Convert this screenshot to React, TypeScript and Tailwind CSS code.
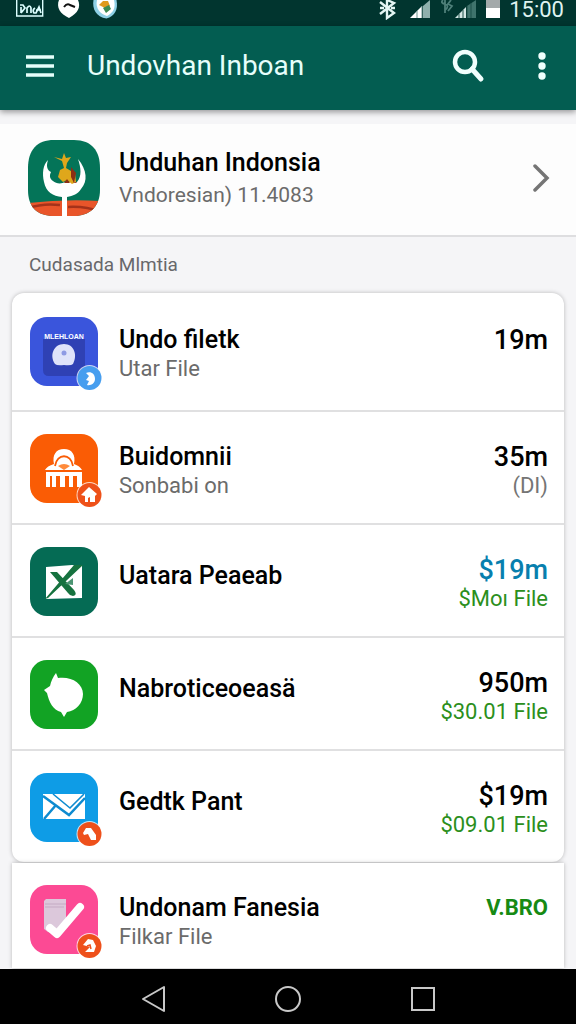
import type { ReactNode } from 'react';

interface AppItem {
  title: string;
  subtitle?: string;
  value: string;
  valueClass?: string;
  note?: string;
  noteClass?: string;
  icon: ReactNode;
}

const BLACK = 'text-[27px] text-black font-medium';
const GREEN = 'text-[#2b8f1c]';

function StatusBar() {
  return (
    <div className="h-[26px] bg-[#01352f] flex items-start justify-between pl-4 pr-3">
      <svg width="104" height="20" viewBox="0 0 104 20" aria-hidden="true">
        <path d="M.7 0v16h26V0" fill="none" stroke="#dff" strokeWidth="1.4" />
        <path d="M4 5h3l2 3-4 5M5 7v6M11 13V8q3-4 4 0v5M19 8q-3 2-1 5h2l3-6 2 6M20 10h5" fill="none" stroke="#dff" strokeWidth="1.7" />
        <path d="M43 0h19c3 7 0 13-9 18C44 14 40 7 43 0z" fill="#fff" />
        <path d="M48 7q3-4 6-2l5 2" fill="none" stroke="#111" strokeWidth="2" />
        <path d="M77.500 0h23c2 10-2 16-10 18.500C80 17 76 9 77.500 0z" fill="#8ed0e6" />
        <path d="M81 0h17c2 8-1 13-7 16C84 14 79 8 81 0z" fill="#fff" />
        <path d="M83 5l4-4h5l2 5-4 3-3-2z" fill="#e09a1c" />
        <path d="M87 8l6-3 2 4-5 4z" fill="#3c8b52" />
      </svg>
      <div className="flex items-start gap-2">
        <svg width="122" height="20" viewBox="0 0 122 20" aria-hidden="true">
          <path d="M1 2l14 11-7 5V0l7 3L1 14M1 8h4M12 8h4" fill="none" stroke="#e4f5f3" strokeWidth="2.400" />
          <path d="M31 18L43 6v12z" fill="#fff" />
          <path d="M44 6l7-6v18h-7z" fill="#8fb0ac" />
          <path d="M38 18v-7M43 18V6" stroke="#6f9590" />
          <path d="M64 0q-3 3 2 4 5 2 0 6M66 0v13M72 0l-3 4 4 2-4 5" fill="none" stroke="#4e7f79" strokeWidth="1.800" />
          <path d="M76 18L87 7v11z" fill="#d5e8e5" />
          <path d="M88 6l9-6v18h-9z" fill="#3f736c" />
          <path d="M80 18v-4M84 18v-8M88 18V6M92 18V3" stroke="#1c5049" />
          <path d="M107 0h14v9h-14z" fill="#a3a9aa" />
          <path d="M107 8h14v10h-14z" fill="#fff" />
        </svg>
        <span className="text-[22px] leading-5 text-[#dff3f1]">15:00</span>
      </div>
    </div>
  );
}

function Badge({ color, children }: { color: string; children: ReactNode }) {
  return (
    <g>
      <circle cx="59.500" cy="61" r="13" fill="#fff" fillOpacity=".75" />
      <circle cx="59.500" cy="61" r="12" fill={color} />
      {children}
    </g>
  );
}

// every tile is 68 wide, badges hang over the corner
function Tile({ color, children }: { color: string; children: ReactNode }) {
  return (
    <svg width="68" height="69" viewBox="0 0 68 69" className="shrink-0 overflow-visible" aria-hidden="true">
      <rect width="68" height="69" rx="17" fill={color} />
      {children}
    </svg>
  );
}

const items: AppItem[] = [
  {
    title: 'Undo filetk',
    subtitle: 'Utar File',
    value: '19m',
    icon: (
      <Tile color="#3a55dc">
        <path d="M13 22h42v37H19q-6 0-6-6z" fill="#2f41b4" />
        <text x="34" y="22" textAnchor="middle" fontSize="7" fontWeight="700" fontFamily="Liberation Sans, sans-serif" fill="#fff">MLEHLOAN</text>
        <path d="M25 47c-6-9-1-20 9-20s14 11 9 20q-2 2-9 1-7 1-9-1z" fill="#dfe3fa" />
        <circle cx="34" cy="36" r="2.500" fill="#8e9ae4" />
        <Badge color="#479eef">
          <path d="M56 56c5-2 9 1 9 6 0 4-4 7-8 6l2-4-3-1 3-4z" fill="#fff" />
        </Badge>
      </Tile>
    ),
  },
  {
    title: 'Buidomnii',
    subtitle: 'Sonbabi on',
    value: '35m',
    note: '(DI)',
    noteClass: 'text-[#757575]',
    icon: (
      <Tile color="#fa5c05">
        <path d="M15 36q2-4 9-6c-2-9 2-15 10-15s12 6 10 15q6 2 8 6z" fill="#fff" />
        <path d="M25 32c2-13 16-13 18 0" fill="none" stroke="#fa5c05" strokeWidth="1.800" />
        <path d="M28 32q6-4 12 0l-6 4z" fill="#ff8a3a" />
        <path d="M16 38h36v15h-5V42h-4v11h-4V42h-4v11h-5V42h-4v11h-4V42h-2v11h-4z" fill="#fff" />
        <Badge color="#ee5119">
          <path d="M51 61l8-8 8 7-2 2v6h-5v-5l-2 1v4h-3v-6z" fill="#fff" />
        </Badge>
      </Tile>
    ),
  },
  {
    title: 'Uatara Peaeab',
    value: '$19m',
    valueClass: 'text-[27px] text-[#087fae] font-medium',
    note: '$Moı File',
    noteClass: GREEN,
    icon: (
      <Tile color="#056b54">
        <path d="M16 20l26-2 10 1v32l-36 1z" fill="#fff" />
        <path d="M15 52L44 18h9L18 51zM20 25h7l17 18q4 5-1 6-3 0-5-3z" fill="#16723f" />
        <path d="M43 31v7l-8-1z" fill="#4c9573" />
      </Tile>
    ),
  },
  {
    title: 'Nabroticeoeasä',
    value: '950m',
    note: '$30.01 File',
    noteClass: GREEN,
    icon: (
      <Tile color="#12a324">
        <path d="M26 13l2 5c13-2 25 5 25 16 0 9-7 17-16 18l-3 5-3-5c-8-2-12-10-14-19l-3-3 6-4c1-5 3-9 6-13z" fill="#fff" />
      </Tile>
    ),
  },
  {
    title: 'Gedtk Pant',
    value: '$19m',
    note: '$09.01 File',
    noteClass: GREEN,
    icon: (
      <Tile color="#0e9ce6">
        <path d="M13 21h42v25H13z" fill="#fff" />
        <path d="M13 23l26 19L55 25M14 46l12-14" fill="none" stroke="#0e8bd0" strokeWidth="2.500" />
        <path d="M23 21l17 14 14-14" fill="none" stroke="#0e8bd0" strokeWidth="1.600" />
        <Badge color="#ee501b">
          <path d="M53 60l3-5 5 0 5 7v5h-5l-3-6-4 1z" fill="#fff" />
        </Badge>
      </Tile>
    ),
  },
];

const lastItem: AppItem = {
  title: 'Undonam Fanesia',
  subtitle: 'Filkar File',
  value: 'V.BRO',
  valueClass: 'text-[22px] text-[#168a14] font-bold',
  icon: (
    <Tile color="#fc4a94">
      <path d="M14 16l2-2h20v29l-10 5-8-1-4-3z" fill="#dcc8db" />
      <path d="M15 19h21M15 22h19" stroke="#c3aac4" strokeWidth="1.200" />
      <path d="M20 43l7 6 23-27" fill="none" stroke="#fff" strokeWidth="8" strokeLinecap="round" strokeLinejoin="round" />
      <Badge color="#ee501b">
        <path d="M53 60l5-6 5 1 3 6-2 6h-9l5-5z" fill="#fff" />
        <path d="M57 61l3-1 1 4" fill="none" stroke="#ee501b" strokeWidth="1.500" />
      </Badge>
    </Tile>
  ),
};

function Row({ item, padding }: { item: AppItem; padding: string }) {
  return (
    <li className={`flex items-start pl-[18px] pr-4 ${padding}`}>
      {item.icon}
      <div className={`ml-[21px] flex-1 min-w-0 ${item.subtitle ? 'pt-2' : 'pt-[14px]'}`}>
        <h3 className="text-[25px] leading-[30px] font-medium text-black">{item.title}</h3>
        {item.subtitle && <p className="text-[22px] leading-7 text-[#6b6b6b]">{item.subtitle}</p>}
      </div>
      <div className="pt-2 text-right whitespace-nowrap">
        <p className={`leading-[30px] ${item.valueClass ?? BLACK}`}>{item.value}</p>
        {item.note && <p className={`text-[22px] leading-7 ${item.noteClass}`}>{item.note}</p>}
      </div>
    </li>
  );
}

export default function App() {
  return (
    <div className="min-h-screen flex flex-col bg-[#f5f5f7] font-['Roboto',sans-serif]">
      <StatusBar />

      <header className="relative h-[84px] bg-[#035d51] flex items-center pb-1 pl-[26px] pr-6 shadow-[0_2px_6px_rgba(0,0,0,0.4)]">
        <button aria-label="Menu" className="text-[#e6fffb]">
          <svg width="28" height="24" viewBox="0 0 28 24" stroke="currentColor" strokeWidth="3.500">
            <path d="M0 3h28M0 12h28M0 21h28" />
          </svg>
        </button>
        <h1 className="ml-[33px] flex-1 text-[28px] leading-9 text-[#e6fffb]">Undovhan Inboan</h1>
        <button aria-label="Search" className="text-[#f0fffd]">
          <svg width="34" height="34" viewBox="0 0 34 34" fill="none" stroke="currentColor">
            <circle cx="14" cy="13" r="10" strokeWidth="4.500" />
            <path d="M21 20l9 10" strokeWidth="5" strokeLinecap="round" />
          </svg>
        </button>
        <button aria-label="More options" className="ml-[47px] text-[#f0fffd]">
          <svg width="20" height="28" viewBox="0 0 20 28" fill="currentColor">
            <circle cx="10" cy="4" r="3.700" />
            <circle cx="10" cy="14" r="3.700" />
            <circle cx="10" cy="24" r="3.700" />
          </svg>
        </button>
      </header>

      <main className="flex-1 pt-[14px]">
        <a href="#unduhan" className="flex items-start pt-4 pb-[18px] pl-7 pr-6 bg-[#fdfdfd] border-b-2 border-[#dedee0]">
          <svg width="72" height="77" viewBox="0 0 72 77" aria-hidden="true">
            <defs>
              <clipPath id="logo">
                <path d="M26 0h20c18 0 26 11 26 28v22c0 17-11 26-26 26H26C9 76 0 67 0 50V28C0 10 9 0 26 0z" />
              </clipPath>
            </defs>
            <g clipPath="url(#logo)">
              <path d="M0 0h72v77H0z" fill="#047458" />
              <path d="M0 63q36-4 72-2v16H0z" fill="#e9552a" />
              <path d="M0 68q15-5 32-3M40 67q18-1 32 5" fill="none" stroke="#a5321a" strokeWidth="2.500" />
            </g>
            <path d="M20 20c-2 6-1 10 3 12-2 4-1 7 2 9 3 3 9 3 12 1h12c5-6 4-14 1-23 9 11 10 22 3 30-3 5-8 7-14 8v20h-5V57c-9-1-16-5-18-15-2-9-1-17 4-22z" fill="#fff" />
            <path d="M26 17l8 2 2-6 2 5 5-1-4 6-1 5 5 3 4 2 1 9-4 2-5-4-4 2-5-5 2-7 4-2-2-7z" fill="#dfa71b" />
            <path d="M43 27l5 6-2 10-3-6zM36 43l3-4 3 4zM45 43h4l-1-1z" fill="#8c2f14" />
          </svg>
          <div className="ml-[19px] flex-1 pt-2">
            <h2 className="text-[25px] leading-[30px] font-medium text-black">Unduhan Indonsia</h2>
            <p className="pt-px text-[21px] leading-8 text-[#6b6b6b]">Vndoresian) 11.4083</p>
          </div>
          <svg width="20" height="28" viewBox="0 0 20 28" className="mt-6" fill="none" stroke="#757575" strokeWidth="3.500" strokeLinecap="round" aria-hidden="true">
            <path d="M3 2l12 12L3 26" />
          </svg>
        </a>

        <h2 className="py-[14px] pl-[29px] text-[19px] leading-7 text-[#68686b]">Cudasada Mlmtia</h2>

        <ul className="mx-3 bg-white rounded-xl divide-y-2 divide-[#e0e0e1] shadow-[0_0_4px_rgba(0,0,0,0.25)]">
          {items.map((item, i) => (
            <Row key={item.title} item={item} padding={i === 0 ? 'py-6' : 'pt-[22px] pb-5'} />
          ))}
        </ul>
        <ul className="mx-3 mt-px bg-white shadow-[0_0_4px_rgba(0,0,0,0.25)]">
          <Row item={lastItem} padding="pt-[22px] pb-[14px]" />
        </ul>
      </main>

      <nav className="relative bg-black text-[#c8c8c8]">
        <div className="flex items-center justify-center gap-[109px] pt-4 pb-[11px]">
          <button aria-label="Back">
            <svg width="26" height="28" viewBox="0 0 26 28" fill="none" stroke="currentColor" strokeWidth="2" strokeLinejoin="round">
              <path d="M24 2v24L3 14z" />
            </svg>
          </button>
          <button aria-label="Home">
            <svg width="26" height="26" viewBox="0 0 26 26" fill="none" stroke="currentColor" strokeWidth="2">
              <circle cx="13" cy="13" r="12" />
            </svg>
          </button>
          <button aria-label="Recent apps">
            <svg width="26" height="26" viewBox="0 0 26 26" fill="none" stroke="currentColor" strokeWidth="2">
              <path d="M2 2h22v22H2z" />
            </svg>
          </button>
        </div>
      </nav>
    </div>
  );
}
